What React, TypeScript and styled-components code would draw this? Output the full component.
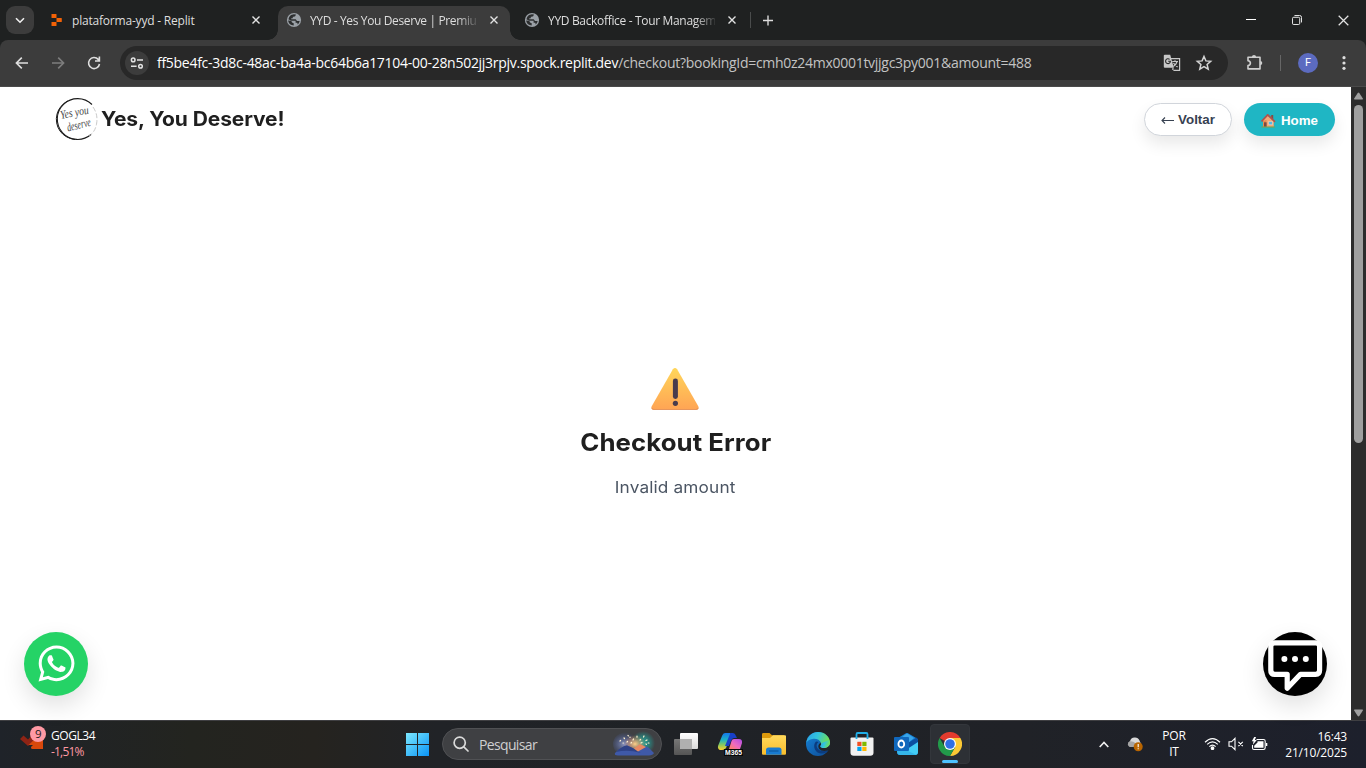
import React from "react";
import styled, { createGlobalStyle } from "styled-components";
import { FaWhatsapp } from "react-icons/fa";

const UI_FONT = '"Open Sans", "Noto Sans", sans-serif';

const GlobalStyle = createGlobalStyle`
  * { box-sizing: border-box; }
  body { margin: 0; overflow: hidden; background: #fff; }
  svg { display: block; flex: none; }
`;

const Screen = styled.div`
  width: 1366px;
  height: 768px;
  display: flex;
  flex-direction: column;
  overflow: hidden;
  font-family: ${UI_FONT};
`;

/* ---------- tab strip ---------- */

const TabStrip = styled.header`
  height: 40px;
  flex: none;
  display: flex;
  background: #1f2121;
  color: #dedede;
`;

const TabSearch = styled.div`
  width: 28px;
  height: 28px;
  margin: 6px 6px 0 6px;
  flex: none;
  border-radius: 9px;
  background: #3c3c3c;
  display: grid;
  place-items: center;
`;

const Tab = styled.div<{ $active?: boolean }>`
  position: relative;
  width: 232px;
  height: 34px;
  margin: 6px ${(p) => (p.$active ? 6 : 0)}px 0 ${(p) => (p.$active ? 6 : 0)}px;
  padding: 0 12px 6px 8px;
  flex: none;
  display: flex;
  align-items: center;
  border-radius: 10px 10px 0 0;
  background: ${(p) => (p.$active ? "#3c3c3c" : "transparent")};
  &::before,
  &::after {
    content: "";
    display: ${(p) => (p.$active ? "block" : "none")};
    position: absolute;
    bottom: 0;
    width: 10px;
    height: 10px;
  }
  &::before {
    left: -10px;
    background: radial-gradient(circle at 0 0, transparent 9.5px, #3c3c3c 10px);
  }
  &::after {
    right: -10px;
    background: radial-gradient(circle at 100% 0, transparent 9.5px, #3c3c3c 10px);
  }
`;

const TabTitle = styled.span<{ $fade?: boolean; $spacing: number }>`
  flex: 1;
  min-width: 0;
  margin: 1px 13px 0 8px;
  font-size: 12px;
  line-height: 18px;
  letter-spacing: ${(p) => p.$spacing}px;
  white-space: nowrap;
  mask-image: ${(p) => (p.$fade ? "linear-gradient(90deg, #000 88%, transparent 102%)" : "none")};
`;

const TabDivider = styled.i`
  width: 1px;
  height: 16px;
  margin: 12px 12px 0 2px;
  background: #4a4c4c;
`;

const NewTab = styled.div`
  margin-top: 15px;
`;

const WindowControls = styled.div`
  margin-left: auto;
  display: flex;
`;

const WindowControl = styled.div`
  width: 46px;
  height: 40px;
  display: grid;
  place-items: center;
`;

/* ---------- toolbar ---------- */

const ToolbarBack = styled.div`
  flex: none;
  background: #1f2121;
`;

const Toolbar = styled.div`
  height: 47px;
  display: flex;
  align-items: center;
  padding: 0 14px;
  background: #3c3c3c;
  border-bottom: 1px solid #4a4a4a;
  border-radius: 8px 8px 0 0;
`;

const NavIcons = styled.div`
  width: 106px;
  display: flex;
  gap: 20px;
`;

const AddressBar = styled.div`
  width: 1108px;
  height: 34px;
  flex: none;
  display: flex;
  align-items: center;
  padding: 0 15px 0 5px;
  border-radius: 17px;
  background: #282828;
`;

const SiteInfo = styled.div`
  width: 24px;
  height: 24px;
  border-radius: 50%;
  background: #3c3c3c;
  display: grid;
  place-items: center;
  margin-right: 8px;
`;

const Url = styled.span`
  flex: 1;
  font-size: 14px;
  line-height: 20px;
  letter-spacing: -0.28px;
  white-space: nowrap;
  color: #c3c3c3;
  b {
    font-weight: 400;
    color: #fff;
  }
`;

const AddressActions = styled.div`
  display: flex;
  gap: 14px;
`;

const ToolbarActions = styled.div`
  flex: 1;
  display: flex;
  align-items: center;
  padding-left: 18px;
`;

const ToolbarDivider = styled.i`
  width: 1px;
  height: 16px;
  margin: 0 17px 0 16px;
  background: #666;
`;

const Avatar = styled.div`
  width: 20px;
  height: 20px;
  margin-right: 18px;
  border-radius: 50%;
  background: #5c6bc0;
  color: #fff;
  font: 11px/20px Roboto, sans-serif;
  text-align: center;
`;

/* ---------- page ---------- */

const Viewport = styled.div`
  height: 633px;
  flex: none;
  display: flex;
`;

const Page = styled.main`
  position: relative;
  width: 1351px;
  background: #fff;
  display: flex;
  flex-direction: column;
`;

const SiteHeader = styled.div`
  height: 65px;
  display: flex;
  align-items: center;
  justify-content: space-between;
  padding: 0 16px 0 55px;
`;

const Brand = styled.div`
  display: flex;
  align-items: center;
  gap: 2px;
  height: 44px;
  margin-bottom: 1px;
`;

const BrandName = styled.span`
  font: 700 20px/28px Inter, sans-serif;
  letter-spacing: -0.1px;
  transform: scaleX(1.05);
  transform-origin: left;
  color: #1f1f1f;
  white-space: nowrap;
`;

const HeaderButtons = styled.div`
  display: flex;
  gap: 12px;
`;

const PillButton = styled.button<{ $primary?: boolean }>`
  height: 33px;
  width: ${(p) => (p.$primary ? 91 : 88)}px;
  display: flex;
  align-items: center;
  justify-content: center;
  gap: ${(p) => (p.$primary ? 5 : 4)}px;
  padding: ${(p) => (p.$primary ? 3 : 1)}px 0 0;
  border: ${(p) => (p.$primary ? "0" : "1px solid #d1d5db")};
  border-radius: 17px;
  background: ${(p) => (p.$primary ? "#1fb6c4" : "#fff")};
  color: ${(p) => (p.$primary ? "#fff" : "#374151")};
  font: 700 13.333px/16px "Liberation Sans", Arial, sans-serif;
  box-shadow: 0 8px 16px rgba(0, 0, 0, 0.09);
`;

const ErrorPanel = styled.section`
  display: flex;
  flex-direction: column;
  align-items: center;
  padding-top: 215px;
`;

const ErrorTitle = styled.h1`
  margin: 14px 0 0;
  font: 700 24px/36px Inter, sans-serif;
  letter-spacing: 0.05px;
  transform: scaleX(1.075);
  color: #1f1f1f;
`;

const ErrorText = styled.p`
  margin: 14px 0 0;
  font: 400 16px/24px Inter, sans-serif;
  letter-spacing: 0.15px;
  transform: scaleX(1.075);
  color: #4b5563;
`;

const FloatingButton = styled.div<{ $side: "left" | "right"; $color: string }>`
  position: absolute;
  bottom: 24px;
  ${(p) => p.$side}: 24px;
  width: 64px;
  height: 64px;
  border-radius: 50%;
  background: ${(p) => p.$color};
  color: #fff;
  display: grid;
  place-items: center;
  box-shadow: 0 10px 24px rgba(0, 0, 0, 0.12);
`;

const Scrollbar = styled.div`
  width: 15px;
  background: #2c2c2c;
  display: flex;
  flex-direction: column;
  align-items: center;
  padding: 5px 0 3px;
`;

const Thumb = styled.div`
  width: 9px;
  height: 338px;
  margin: 5px 0 auto;
  border-radius: 5px;
  background: #9f9f9f;
`;

/* ---------- taskbar ---------- */

const Taskbar = styled.footer`
  height: 48px;
  flex: none;
  display: grid;
  grid-template-columns: 397px 1fr auto;
  align-items: center;
  padding-bottom: 1px;
  border-top: 1px solid #3f3f42;
  background: linear-gradient(90deg, #1f2329 0, #23241f 14%, #25231f 23%, #212327 32%, #1f2226 50%, #202227 75%, #1d202c 100%);
  color: #fff;
`;

const Widget = styled.div`
  display: flex;
  align-items: center;
  gap: 4px;
  padding-left: 19px;
`;

const StockBadge = styled.div`
  padding-bottom: 13px;
`;

const WidgetText = styled.div`
  display: flex;
  flex-direction: column;
  font-size: 12px;
  line-height: 16px;
  letter-spacing: -0.42px;
`;

const Loss = styled.span`
  letter-spacing: -0.8px;
  color: #ff99a4;
`;

const Apps = styled.div`
  display: flex;
  align-items: center;
`;

const AppSlot = styled.div<{ $active?: boolean }>`
  position: relative;
  width: 40px;
  height: 40px;
  margin-right: 4px;
  border-radius: 4px;
  border: 1px solid ${(p) => (p.$active ? "#33363b" : "transparent")};
  background: ${(p) => (p.$active ? "#2d3035" : "transparent")};
  display: grid;
  place-items: center;
  &::after {
    content: "";
    display: ${(p) => (p.$active ? "block" : "none")};
    position: absolute;
    left: 11px;
    bottom: 0;
    width: 16px;
    height: 3px;
    border-radius: 2px;
    background: #4cc2ff;
  }
`;

const SearchBox = styled.div`
  width: 220px;
  height: 32px;
  margin: 0 4px 0 1px;
  padding: 0 6px 0 10px;
  display: flex;
  align-items: center;
  border-radius: 16px;
  border: 1px solid #505154;
  background: #3f4043;
`;

const SearchText = styled.span`
  flex: 1;
  margin-left: 10px;
  font-size: 14px;
  letter-spacing: -0.65px;
  color: #cfcfd0;
`;

const Tray = styled.div`
  display: flex;
  align-items: center;
  padding-right: 19px;
  font-size: 12px;
  line-height: 16px;
  letter-spacing: -0.2px;
`;

const Language = styled.div`
  width: 28px;
  margin: 0 16px 0 17px;
  text-align: center;
`;

const StatusIcons = styled.div`
  display: flex;
  align-items: center;
  gap: 7px;
`;

const Clock = styled.div`
  width: 66px;
  margin-left: 13px;
  padding-top: 1px;
  text-align: right;
  white-space: nowrap;
`;

/* ---------- icons ---------- */

const Globe = () => (
  <svg width="16" height="16" viewBox="0 0 16 16">
    <circle cx="8" cy="8" r="7.1" fill="#9aa0a6" />
    <path d="M2 8.6 4.4 8.7Q6 8.8 6 10.4L7.7 11.3V13.6Q3.2 13.4 2 8.6ZM7.9 2.2 10 2.5Q9.4 4.7 7.8 4.7H6.8V6.3H5.3V7.3H9.7L11 9.1H13.7Q13.2 11.2 11.7 12.4L11.3 10.7H9.6V8.8H5.2L2.4 7.3Q3 4.5 5 3Z" fill="#2c2e2f" />
  </svg>
);

const Cross = ({ size = 8, width = 1.4 }: { size?: number; width?: number }) => (
  <svg width={size} height={size} viewBox="0 0 8 8">
    <path d="M.5.5 7.5 7.5M7.5.5.5 7.5" stroke="#e3e3e3" strokeWidth={width} />
  </svg>
);

const ReplitMark = () => (
  <svg width="16" height="16" viewBox="0 0 16 16" fill="#f26207">
    <rect x="3.5" y="2" width="5" height="4" rx=".6" />
    <rect x="8.5" y="6" width="5.3" height="4" rx=".6" />
    <rect x="3.5" y="10" width="5" height="4" rx=".6" />
  </svg>
);

const Arrow = ({ flip, color }: { flip?: boolean; color: string }) => (
  <svg width="16" height="16" viewBox="0 0 16 16" fill="none" stroke={color} strokeWidth="1.6">
    <path d={flip ? "M2 8H13.4M8.2 2.6 13.6 8 8.2 13.4" : "M14 8H2.6M7.8 2.6 2.4 8 7.8 13.4"} />
  </svg>
);

const Reload = () => (
  <svg width="16" height="16" viewBox="0 0 16 16" fill="none" stroke="#dedede" strokeWidth="1.6">
    <path d="M13.5 9A5.5 5.5 0 1 1 12.2 4.4L13 5.4M13.4 1.6V6H9" />
  </svg>
);

const Tune = () => (
  <svg width="14" height="14" viewBox="0 0 14 14" fill="none" stroke="#e3e3e3" strokeWidth="1.5">
    <circle cx="3.2" cy="3.9" r="1.8" />
    <path d="M7 3.9H13M1 10.2H6.6" />
    <circle cx="10.5" cy="10.2" r="1.8" />
  </svg>
);

const Translate = () => (
  <svg width="18" height="18" viewBox="0 0 18 18">
    <path d="M8 4.6H16.6V16.4H10.4" fill="none" stroke="#c7c7c7" strokeWidth="1.2" />
    <path d="M1.8.8H7.2L10.8 13.8H1.8Q.8 13.8.8 12.8V1.8Q.8.8 1.8.8Z" fill="#c7c7c7" />
    <path d="M5.2 7.2H7.4A2.4 2.4 0 1 1 6.6 5.4" fill="none" stroke="#282828" strokeWidth="1.1" />
    <path d="M9.2 7.5H15M12 6.2V7.5M14 7.8Q13 11 10.3 12.5M10.5 9Q11.8 11.2 14.6 13M10 13.8 9.8 16" fill="none" stroke="#c7c7c7" strokeWidth="1.2" />
  </svg>
);

const Star = () => (
  <svg width="18" height="18" viewBox="0 0 18 18" fill="none" stroke="#d5d5d5" strokeWidth="1.5">
    <path d="M9 2.5 10.9 6.9 15.7 7.3 12.1 10.5 13.2 15.2 9 12.7 4.8 15.2 5.9 10.5 2.3 7.3 7.1 6.9Z" />
  </svg>
);

const Puzzle = () => (
  <svg width="18" height="18" viewBox="0 0 18 18" fill="none" stroke="#cfcfcf" strokeWidth="1.6" strokeLinejoin="round">
    <path d="M2 3.2H14V14.9H2V11.6Q4.4 11.2 4.4 9.1T2 6.7Z" />
    <path d="M5.9 3A2.1 2.1 0 0 1 10.1 3ZM14.2 7A2.1 2.1 0 0 1 14.2 11.2Z" fill="#cfcfcf" stroke="none" />
  </svg>
);

const Kebab = () => (
  <svg width="16" height="16" viewBox="0 0 16 16" fill="#dedede">
    <circle cx="8" cy="2.7" r="1.6" />
    <circle cx="8" cy="8" r="1.6" />
    <circle cx="8" cy="13.3" r="1.6" />
  </svg>
);

const LogoText = styled.text`
  font: italic 12px "Liberation Serif", serif;
  fill: #444;
`;

const BrandLogo = () => (
  <svg width="44" height="44" viewBox="0 0 44 44" overflow="visible">
    <path d="M37 7.5A20.4 20.4 0 1 0 36 37.5" fill="none" stroke="#1b1b1b" strokeWidth="1.1" />
    <path d="M13 3.9A20.4 20.4 0 0 0 5 34Q10 41 20 42.5" fill="none" stroke="#1b1b1b" strokeWidth="1" />
    <path d="M38 10Q43 17 41.7 26T34 39" fill="none" stroke="#bbb" strokeWidth=".8" strokeDasharray="5 2" />
    <LogoText transform="translate(6 22) rotate(-11) scale(.8 1)">Yes you</LogoText>
    <LogoText transform="translate(13 34.5) rotate(-14) scale(.66 1)">deserve</LogoText>
  </svg>
);

const House = () => (
  <svg width="15" height="14" viewBox="0 0 15 14">
    <rect x="10.2" y="1" width="2" height="4" fill="#8a4b42" />
    <path d="M2 6 6.4 1.6 12.8 7V13H2Z" fill="#f2a878" />
    <path d="M2 7V13H5.5V6Z" fill="#e98a4c" />
    <path d="M.5 7.4 6.7.8 14 7.8" fill="none" stroke="#b0524c" strokeWidth="1.7" />
    <rect x="3" y="8.3" width="2.6" height="4.7" fill="#7c4a42" />
    <rect x="7.8" y="7.6" width="3.4" height="3.2" fill="#4fb8e8" stroke="#f3ddc8" strokeWidth=".5" />
    <path d="M.5 12.4H14V13.6H.5Z" fill="#79a15a" />
  </svg>
);

const Warning = () => (
  <svg width="51" height="44" viewBox="0 0 51 44">
    <defs>
      <linearGradient id="warn" x1="0" y1="0" x2="0" y2="1">
        <stop offset="0" stopColor="#ffd65a" />
        <stop offset="1" stopColor="#ffa454" />
      </linearGradient>
    </defs>
    <path d="M22.9 2.2Q25 -.2 27.1 2.2L48.3 39.2Q49.2 42.6 46.4 42.8H3.6Q.8 42.6 1.7 39.2Z" fill="url(#warn)" />
    <path d="M1.6 40.2Q1 42.6 3.6 42.8H46.4Q49 42.6 48.4 40.2Q48 42 46 42H4Q2 42 1.6 40.2Z" fill="#e08b52" />
    <rect x="22.9" y="11.5" width="5" height="20.5" rx="2.4" fill="#493c4d" />
    <circle cx="25.4" cy="36.3" r="2.6" fill="#493c4d" />
  </svg>
);

const WhatsAppGlyph = styled(FaWhatsapp)`
  margin-bottom: 1px;
`;

const ChatBubble = () => (
  <svg width="64" height="64" viewBox="0 0 64 64">
    <path d="M11.6 10.8H52.8Q56.6 10.8 56.6 14.6V38.3Q56.6 42.3 52.6 42.3H37.5L24.2 56.2V42.3H11.8Q7.8 42.3 7.8 38.3V14.6Q7.8 10.8 11.6 10.8Z" fill="#000" stroke="#fff" strokeWidth="5.2" strokeLinejoin="round" />
    <circle cx="21.4" cy="27" r="3" fill="#fff" />
    <circle cx="32" cy="27" r="3" fill="#fff" />
    <circle cx="42.8" cy="27" r="3" fill="#fff" />
  </svg>
);

const ScrollArrow = ({ down }: { down?: boolean }) => (
  <svg width="9" height="8" viewBox="0 0 9 8" fill="#9f9f9f">
    <path d={down ? "M0 1.2Q0 .5.7.5H8.3Q9 .5 9 1.2L5.3 7.1Q4.5 7.8 3.7 7.1Z" : "M0 6.8Q0 7.5.7 7.5H8.3Q9 7.5 9 6.8L5.3.9Q4.5.2 3.7.9Z"} />
  </svg>
);

const StockIcon = () => (
  <svg width="28" height="30" viewBox="0 0 28 30">
    <path d="M1 16 4.5 12.5 9 16.5 14 11V19L9 23Z" fill="#8f2415" />
    <path d="M9.5 22 16 16 24 14V26H13.5Q11.5 26 12 24L14 22Z" fill="#d9480b" />
    <circle cx="19" cy="11" r="8" fill="#ff99a4" />
    <text x="19.3" y="15" textAnchor="middle" fontSize="11.5" fill="#1c1c1c">9</text>
  </svg>
);

const WindowsLogo = () => (
  <svg width="24" height="24" viewBox="0 0 24 24">
    <defs>
      <linearGradient id="win" x1="0" y1="0" x2="1" y2="1">
        <stop offset="0" stopColor="#7ce8ff" />
        <stop offset="1" stopColor="#0a94f5" />
      </linearGradient>
    </defs>
    <path d="M1 1H12V12H1ZM13 1H24V12H13ZM1 13H12V24H1ZM13 13H24V24H13Z" fill="url(#win)" />
  </svg>
);

const Magnifier = () => (
  <svg width="16" height="16" viewBox="0 0 16 16" fill="none" stroke="#dadada" strokeWidth="1.7">
    <circle cx="6.7" cy="6.7" r="5.6" />
    <path d="M10.8 10.8 15 15" strokeLinecap="round" />
  </svg>
);

const SearchArt = () => (
  <svg width="42" height="26" viewBox="0 0 42 26">
    <defs>
      <radialGradient id="auroraBlue" cx=".4" cy=".5" r=".5">
        <stop offset="0" stopColor="#8b95c0" />
        <stop offset="1" stopColor="#4056a0" stopOpacity="0" />
      </radialGradient>
      <radialGradient id="auroraTeal" cx=".5" cy=".5" r=".5">
        <stop offset="0" stopColor="#27a598" />
        <stop offset=".5" stopColor="#278c86" stopOpacity=".8" />
        <stop offset="1" stopColor="#278c86" stopOpacity="0" />
      </radialGradient>
      <radialGradient id="glow">
        <stop offset="0" stopColor="#ffcf8a" />
        <stop offset="1" stopColor="#ef8c58" stopOpacity="0" />
      </radialGradient>
    </defs>
    <ellipse cx="14" cy="13" rx="14" ry="12" fill="url(#auroraBlue)" />
    <ellipse cx="30" cy="12" rx="12" ry="12" fill="url(#auroraTeal)" />
    <ellipse cx="22" cy="13" rx="11" ry="9" fill="url(#glow)" />
    <path d="M2 22Q8 16 14 14.5Q20 17 24 20Q32 13 36 17L41 22Q40 24 36 24.5H5Q1 24.5 2 22Z" fill="#3f59a8" />
    <path d="M3 21Q9 15 14 14.5Q19 16 24 20L28 22Q15 18 3 21Z" fill="#2f4287" />
    <path d="M21 17.5 27 13 33 16 25 20.5Z" fill="#e98962" />
    <path d="M7 10l.6-.6M11 7l.5.5M14 11l.6-.6M17 6v.5M20 9l.5-1M24 5v1.2M27 9l.6-.6M31 5l-.5 1M34 9l-1 .6M36 12h-.8M10 12h.4M18 12l.5-.5M28 12l1-.5M15 4.5l.4.4M33 13l.4.4" stroke="#fff1cd" strokeWidth="1.2" strokeLinecap="round" />
  </svg>
);

const TaskView = () => (
  <svg width="24" height="24" viewBox="0 0 24 24">
    <defs>
      <linearGradient id="tv" x1="0" y1="0" x2="0" y2="1"><stop stopColor="#fff" /><stop offset="1" stopColor="#dadada" /></linearGradient>
      <linearGradient id="tvb" x1="0" y1="0" x2="0" y2="1"><stop stopColor="#777" /><stop offset="1" stopColor="#555" /></linearGradient>
    </defs>
    <rect x="0" y="7" width="18" height="16" rx="1" fill="url(#tvb)" />
    <rect x="6" y="1" width="18" height="16" rx="1" fill="url(#tv)" />
    <path d="M6 7H18V17H7Q6 17 6 16Z" fill="#b0b0b0" />
  </svg>
);

const Copilot = () => (
  <svg width="26" height="24" viewBox="0 0 26 24">
    <defs>
      <linearGradient id="cpl" x1="0" y1="0" x2="0" y2="1">
        <stop stopColor="#1477ed" /><stop offset=".4" stopColor="#1db3c2" /><stop offset=".7" stopColor="#8ac85c" /><stop offset="1" stopColor="#ffd02d" />
      </linearGradient>
      <linearGradient id="cpr" x1="1" y1="0" x2="0" y2="1">
        <stop stopColor="#ad4be6" /><stop offset=".55" stopColor="#ee6bbf" /><stop offset="1" stopColor="#ff815e" />
      </linearGradient>
    </defs>
    <path d="M8 1H15L9 16Q8 18 5 18H3Q.5 17 1 14L5 4Q6 1 8 1Z" fill="url(#cpl)" />
    <path d="M13 1H16Q18 1 19 4L20 6H17Q15 6 14 9L12 14H8L13 2Z" fill="#173fc9" />
    <path d="M17 7H22Q25.5 7 25 11L23 17H12L14.5 9Q15 7 17 7Z" fill="url(#cpr)" />
    <rect x="7" y="17" width="19" height="7" fill="#080808" />
    <text x="16.5" y="23" textAnchor="middle" fontSize="6.8" fontWeight="700" fill="#fff" fontFamily="Liberation Sans" textLength="17">M365</text>
  </svg>
);

const Folder = () => (
  <svg width="24" height="24" viewBox="0 0 24 24">
    <defs><linearGradient id="fold" x1="0" y1="0" x2="0" y2="1"><stop stopColor="#ffd95d" /><stop offset="1" stopColor="#f8bd2b" /></linearGradient></defs>
    <path d="M0 2.4Q0 1 1.4 1H7.5L10 3.2H22V8H0Z" fill="#dd9a0c" />
    <path d="M0 6H8L11 3.2H23Q24 3.2 24 4.2V21.8Q24 22.8 23 22.8H1Q0 22.8 0 21.8Z" fill="url(#fold)" />
    <path d="M4 22.8V18Q4 15.5 6.5 15.5H17Q19.5 15.5 19.5 18V22.8Z" fill="#187bd0" />
    <path d="M7 19H16.5" stroke="#0e599f" strokeWidth="1.2" />
  </svg>
);

const Edge = () => (
  <svg width="24" height="24" viewBox="0 0 24 24">
    <defs>
      <linearGradient id="edgeTop" x1="0" y1="0" x2="1" y2=".3"><stop stopColor="#2b9fe8" /><stop offset=".5" stopColor="#32c4dc" /><stop offset="1" stopColor="#6fdf55" /></linearGradient>
      <linearGradient id="edgeLow" x1="0" y1="0" x2="1" y2="1"><stop stopColor="#1583d8" /><stop offset="1" stopColor="#0e4a93" /></linearGradient>
    </defs>
    <circle cx="12" cy="12" r="12" fill="url(#edgeLow)" />
    <path d="M.4 10.5C1.2 4.2 6 0 12 0 19 0 24 5 24 10.2C24 14 21.5 16 18.3 16C15.5 16 14 15 14.4 14C15.3 13 15.3 12 15 11C14.2 8 11 6.5 7.6 6.7C4 7 1.5 8.6.4 10.5Z" fill="url(#edgeTop)" />
    <path d="M9.2 10.5C6.7 14.5 9 21 15 21.5C18.8 21.7 21.2 20 22.5 18C18 20 12.5 19.3 11 15.5C10 13 11.2 11 12.4 10.2C11.5 9.4 10 9.3 9.2 10.5Z" fill="#0c3c7e" />
    <path d="M14.7 10.5Q15.5 12.8 14.2 14.2Q14.6 16 19 16Q22 15.6 23.6 13L24 17 22 18.5Q15.5 20 13 16.8Q11 13.3 14.7 10.5Z" fill="#212428" />
    <path d="M14.4 14Q14 16 18.5 16Q23 15.8 24 10.5L23 8 16 11Z" fill="url(#edgeTop)" />
  </svg>
);

const Store = () => (
  <svg width="24" height="24" viewBox="0 0 24 24">
    <path d="M.5 6.5Q.5 5.5 1.5 5.5H22.5Q23.5 5.5 23.5 6.5V20.5Q23.5 23.7 20.3 23.7H3.7Q.5 23.7.5 20.5Z" fill="#f1f1f1" />
    <path d="M6.5 7V2.2Q6.5 1 7.7 1H16.3Q17.5 1 17.5 2.2V7" fill="none" stroke="#20aee8" strokeWidth="1.8" />
    <rect x="7.3" y="9.8" width="4.2" height="4.2" fill="#f25022" />
    <rect x="12.3" y="9.8" width="4.2" height="4.2" fill="#7fba00" />
    <rect x="7.3" y="14.8" width="4.2" height="4.2" fill="#00a4ef" />
    <rect x="12.3" y="14.8" width="4.2" height="4.2" fill="#ffb900" />
  </svg>
);

const Outlook = () => (
  <svg width="24" height="24" viewBox="0 0 24 24">
    <path d="M3 6.5 12 1.3Q13 .7 14 1.3L23 6.5Q24 7 24 8V20Q24 23 21 23H6Q3 23 3 20Z" fill="#1482d8" />
    <path d="M5 7.5 12 2Q13 1.2 14 2L20 6 14 11Z" fill="#3aa5e8" />
    <path d="M14 14 24 9V20Q24 23 21 23H8Z" fill="#43cdf5" />
    <path d="M14 11 22.5 5.5 24 7.5V10L14 16.5Z" fill="#0c4fa0" />
    <path d="M3 19H14L22 22.8Q21 23 20 23H6Q3 23 3 19Z" fill="#35b6ea" />
    <rect x="0" y="5" width="15" height="14" rx="1" fill="#1068bd" />
    <ellipse cx="7.3" cy="12" rx="2.9" ry="3.5" fill="none" stroke="#fff" strokeWidth="1.8" />
  </svg>
);

const Chrome = () => (
  <svg width="24" height="24" viewBox="0 0 24 24">
    <path d="M12 12 1.6 6A12 12 0 0 1 22.4 6Z" fill="#e33b2e" />
    <path d="M12 6H22.4A12 12 0 0 1 12 24L17.2 15Z" fill="#fcc934" />
    <path d="M1.6 6 6.8 15 12 18 17.2 15 12 24A12 12 0 0 1 1.6 6Z" fill="#229a4a" />
    <circle cx="12" cy="12" r="6" fill="#fff" />
    <circle cx="12" cy="12" r="4.8" fill="#2f6fe4" />
  </svg>
);

const Chevron = ({ up, width = 10 }: { up?: boolean; width?: number }) => (
  <svg width={width} height="7" viewBox="0 0 10 7" fill="none" stroke="#f0f0f0" strokeWidth="1.6">
    <path d={up ? "M.7 6 5 1.5 9.3 6" : "M1 1.2 5 5.2 9 1.2"} />
  </svg>
);

const CloudWrap = styled.div`
  margin-left: 17px;
`;

const Cloud = () => (
  <svg width="16" height="16" viewBox="0 0 16 16">
    <path d="M4 11A3 3 0 0 1 3 5.3 5 5 0 0 1 12.5 4.5L14 8 9 11Z" fill="#d9d9d9" />
    <path d="M3 11A3 3 0 0 1 3 5.3Q6 5 9 7.6L7 11Z" fill="#a5a5a5" />
    <circle cx="11.2" cy="10.7" r="4.5" fill="#b96500" />
    <path d="M11.2 8V11.3M11.2 12.2V13.3" stroke="#fff" strokeWidth="1.1" />
  </svg>
);

const Wifi = () => (
  <svg width="17" height="14" viewBox="0 0 17 14" fill="none" stroke="#fff" strokeWidth="1.2">
    <path d="M1 5.2Q8.5 -2 16 5.2M3.2 7.4Q8.5 2.3 13.8 7.4M5.4 9.6Q8.5 6.6 11.6 9.6" />
    <circle cx="8.5" cy="11.2" r="1.3" fill="#fff" />
  </svg>
);

const Muted = () => (
  <svg width="16" height="14" viewBox="0 0 16 14" fill="none" stroke="#fff" strokeWidth="1.1">
    <path d="M1 4.8H3.5L7 1.4V12.6L3.5 9.2H1ZM10.4 4.8 14.8 9.2M14.8 4.8 10.4 9.2" />
  </svg>
);

const Battery = () => (
  <svg width="17" height="14" viewBox="0 0 17 14">
    <path d="M5.5 2.5H12.5Q14.2 2.5 14.2 4.2V10.8Q14.2 12.5 12.5 12.5H3Q1.5 12.5 1.5 11V8" fill="none" stroke="#fff" strokeWidth="1.1" />
    <path d="M6.5 4.3H12.5V10.8H3.2V8.8L6.5 5.5ZM15 6H16.3V9H15Z" fill="#fff" />
    <path d="M3.2 0 .8 4.3H2.6L1.8 7.8 5.8 3H3.9L5 0Z" fill="#fff" />
  </svg>
);

/* ---------- composition ---------- */

export default function App() {
  return (
    <Screen>
      <GlobalStyle />
      <TabStrip>
        <TabSearch><Chevron width={10} /></TabSearch>
        <Tab>
          <ReplitMark />
          <TabTitle $spacing={-0.2}>plataforma-yyd - Replit</TabTitle>
          <Cross />
        </Tab>
        <Tab $active>
          <Globe />
          <TabTitle $fade $spacing={-0.37}>YYD - Yes You Deserve | Premiu</TabTitle>
          <Cross />
        </Tab>
        <Tab>
          <Globe />
          <TabTitle $fade $spacing={-0.33}>YYD Backoffice - Tour Managem</TabTitle>
          <Cross />
        </Tab>
        <TabDivider />
        <NewTab>
          <svg width="10" height="11" viewBox="0 0 11 11"><path d="M5.5 0V11M0 5.5H11" stroke="#dedede" strokeWidth="1.5" /></svg>
        </NewTab>
        <WindowControls>
          <WindowControl><svg width="10" height="10"><path d="M0 4.5H10" stroke="#fff" /></svg></WindowControl>
          <WindowControl>
            <svg width="10" height="10" viewBox="0 0 11 11" fill="none" stroke="#fff"><rect x=".5" y="2.5" width="8" height="8" rx="1.4" /><path d="M2.7.5H8.3Q10.5.5 10.5 2.7V8.2" /></svg>
          </WindowControl>
          <WindowControl><Cross size={11} width={0.9} /></WindowControl>
        </WindowControls>
      </TabStrip>

      <ToolbarBack>
        <Toolbar>
          <NavIcons>
            <Arrow color="#dedede" />
            <Arrow flip color="#7d7d7d" />
            <Reload />
          </NavIcons>
          <AddressBar>
            <SiteInfo><Tune /></SiteInfo>
            <Url><b>ff5be4fc-3d8c-48ac-ba4a-bc64b6a17104-00-28n502jj3rpjv.spock.replit.dev</b>/checkout?bookingId=cmh0z24mx0001tvjjgc3py001&amp;amount=488</Url>
            <AddressActions><Translate /><Star /></AddressActions>
          </AddressBar>
          <ToolbarActions>
            <Puzzle />
            <ToolbarDivider />
            <Avatar>F</Avatar>
            <Kebab />
          </ToolbarActions>
        </Toolbar>
      </ToolbarBack>

      <Viewport>
        <Page>
          <SiteHeader>
            <Brand>
              <BrandLogo />
              <BrandName>Yes, You Deserve!</BrandName>
            </Brand>
            <HeaderButtons>
              <PillButton>
                <svg width="13" height="9" viewBox="0 0 13 9" fill="none" stroke="#374151" strokeWidth="1.1"><path d="M13 4.5H1M4 1.5 1 4.5 4 7.5" /></svg>
                Voltar
              </PillButton>
              <PillButton $primary><House />Home</PillButton>
            </HeaderButtons>
          </SiteHeader>
          <ErrorPanel>
            <Warning />
            <ErrorTitle>Checkout Error</ErrorTitle>
            <ErrorText>Invalid amount</ErrorText>
          </ErrorPanel>
          <FloatingButton $side="left" $color="#25d366"><WhatsAppGlyph size={41} /></FloatingButton>
          <FloatingButton $side="right" $color="#000"><ChatBubble /></FloatingButton>
        </Page>
        <Scrollbar>
          <ScrollArrow />
          <Thumb />
          <ScrollArrow down />
        </Scrollbar>
      </Viewport>

      <Taskbar>
        <Widget>
          <StockBadge><StockIcon /></StockBadge>
          <WidgetText><span>GOGL34</span><Loss>-1,51%</Loss></WidgetText>
        </Widget>
        <Apps>
          <AppSlot><WindowsLogo /></AppSlot>
          <SearchBox>
            <Magnifier />
            <SearchText>Pesquisar</SearchText>
            <SearchArt />
          </SearchBox>
          <AppSlot><TaskView /></AppSlot>
          <AppSlot><Copilot /></AppSlot>
          <AppSlot><Folder /></AppSlot>
          <AppSlot><Edge /></AppSlot>
          <AppSlot><Store /></AppSlot>
          <AppSlot><Outlook /></AppSlot>
          <AppSlot $active><Chrome /></AppSlot>
        </Apps>
        <Tray>
          <Chevron up width={12} />
          <CloudWrap><Cloud /></CloudWrap>
          <Language>POR<br />IT</Language>
          <StatusIcons><Wifi /><Muted /><Battery /></StatusIcons>
          <Clock>16:43<br />21/10/2025</Clock>
        </Tray>
      </Taskbar>
    </Screen>
  );
}
